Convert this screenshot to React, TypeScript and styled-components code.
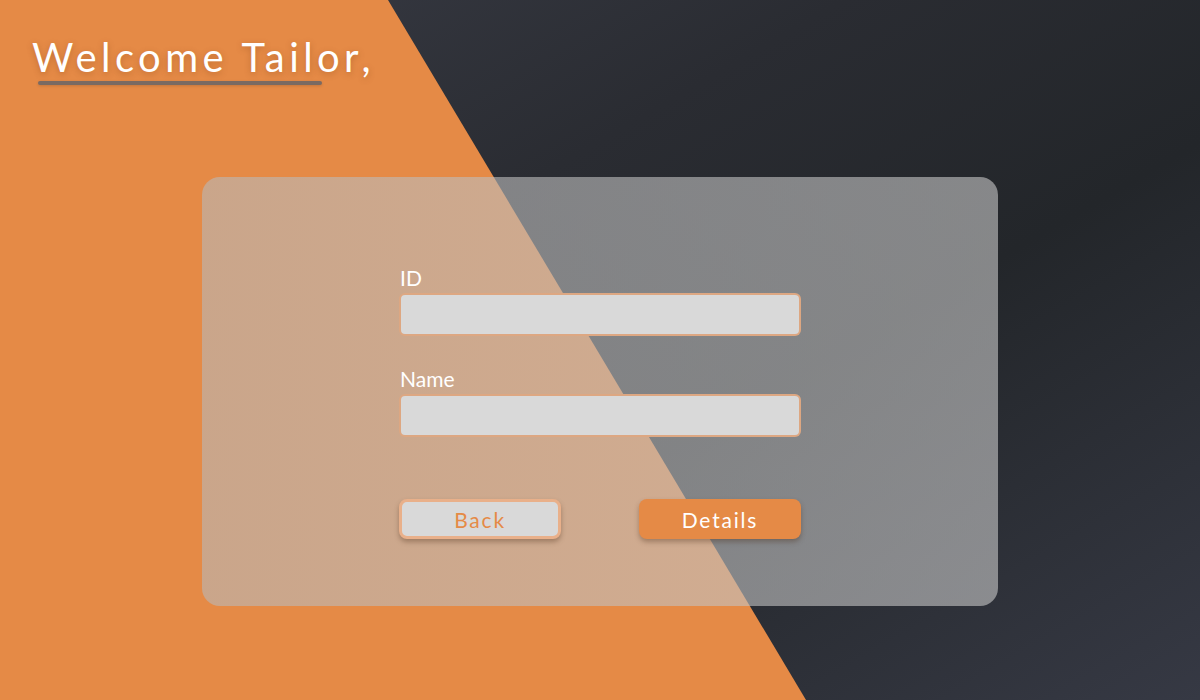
import React from 'react'
import styled, { createGlobalStyle } from 'styled-components'

const GlobalStyle = createGlobalStyle`
  html, body {
    margin: 0;
    padding: 0;
  }
  body {
    font-family: Lato, "Open Sans", sans-serif;
  }
`

const App: React.FC = () =>
  <>
    <GlobalStyle />
    <Page>
      <Header>
        <Title>Welcome Tailor,</Title>
        <Underline />
      </Header>
      <CardArea>
        <Card>
          <Form>
            <Field>
              <Label>ID</Label>
              <Input />
            </Field>
            <Field>
              <Label>Name</Label>
              <Input />
            </Field>
            <Actions>
              <Button variant="ghost">Back</Button>
              <Button variant="primary">Details</Button>
            </Actions>
          </Form>
        </Card>
      </CardArea>
    </Page>
  </>

const Page = styled.div`
  position: relative;
  width: 1200px;
  height: 700px;
  overflow: hidden;
  display: flex;
  flex-direction: column;
  background: linear-gradient(150deg, #3a3d47 0%, #2a2c32 35%, #23262a 60%, #363944 100%);

  &::before {
    content: '';
    position: absolute;
    inset: 0;
    background: #e58a46;
    clip-path: polygon(0 0, 388px 0, 806px 700px, 0 700px);
  }

  & > * {
    position: relative;
  }
`

const Header = styled.header`
  padding: 34px 0 0 32px;
  display: flex;
  flex-direction: column;
  align-items: flex-start;
`

const Title = styled.h1`
  margin: 0;
  font-family: Lato, sans-serif;
  font-weight: 400;
  font-size: 40px;
  line-height: 46px;
  letter-spacing: 4.4px;
  color: #ffffff;
  text-shadow: 0 2px 6px rgba(120, 60, 20, 0.35);
`

const Underline = styled.div`
  margin: 1px 0 0 6px;
  width: 284px;
  height: 4px;
  border-radius: 2px;
  background: #7a6a62;
  box-shadow: 0 1px 3px rgba(0, 0, 0, 0.15);
`

const CardArea = styled.main`
  display: flex;
  justify-content: center;
  padding-top: 92px;
`

const Card = styled.section`
  width: 796px;
  height: 429px;
  box-sizing: border-box;
  border-radius: 18px;
  background: linear-gradient(90deg, rgba(184, 184, 184, 0.6) 0%, rgba(200, 200, 200, 0.6) 100%);
  display: flex;
  justify-content: center;
  padding-top: 90px;
`

const Form = styled.div`
  width: 402px;
  display: flex;
  flex-direction: column;
  gap: 32px;
`

const Field = styled.div`
  display: flex;
  flex-direction: column;
  gap: 4px;
`

const Label = styled.label`
  font-family: Lato, sans-serif;
  font-size: 21px;
  line-height: 22px;
  color: #ffffff;
  padding-left: 1px;
`

const Input = styled.input`
  height: 43px;
  box-sizing: border-box;
  border: 2px solid rgba(222, 150, 100, 0.75);
  border-radius: 6px;
  background: #d9d9d9;
  outline: none;
  font-size: 16px;
`

const Button = styled.button<{ variant: 'ghost' | 'primary' }>`
  width: 162px;
  height: 40px;
  box-sizing: border-box;
  border-radius: 8px;
  font-family: Lato, sans-serif;
  font-size: 21px;
  letter-spacing: 1.8px;
  cursor: pointer;
  box-shadow: 0 3px 5px rgba(70, 40, 20, 0.35);
  ${({ variant }) => variant === 'primary' ? `
    background: #e58a46;
    color: #ffffff;
    border: none;
  ` : `
    background: #d9d9d9;
    color: #e58a46;
    border: 3px solid #e9b08a;
  `}
`

const Actions = styled.div`
  margin-top: 30px;
  display: flex;
  justify-content: space-between;
`

export default App
